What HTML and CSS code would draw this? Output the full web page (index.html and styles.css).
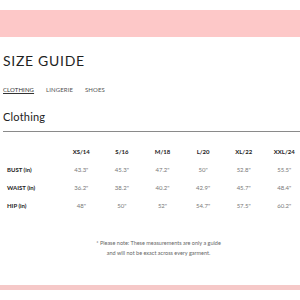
FILE: index.html
```html
<!DOCTYPE html>
<html>
<head>
<meta charset="utf-8">
<link rel="stylesheet" href="styles.css">
</head>
<body>
<div class="band-top"></div>
<main class="page">
  <h1 class="title">SIZE GUIDE</h1>
  <nav class="tabs">
    <span class="tab active">CLOTHING</span>
    <span class="tab">LINGERIE</span>
    <span class="tab">SHOES</span>
  </nav>
  <h2 class="section">Clothing</h2>
  <div class="rule"></div>
  <div class="table">
    <div class="row head">
      <span class="label"></span>
      <span>XS/14</span><span>S/16</span><span>M/18</span><span>L/20</span><span>XL/22</span><span>XXL/24</span>
    </div>
    <div class="row">
      <span class="label">BUST (in)</span>
      <span>43.3"</span><span>45.3"</span><span>47.2"</span><span>50"</span><span>52.8"</span><span>55.5"</span>
    </div>
    <div class="row">
      <span class="label">WAIST (in)</span>
      <span>36.2"</span><span>38.2"</span><span>40.2"</span><span>42.9"</span><span>45.7"</span><span>48.4"</span>
    </div>
    <div class="row">
      <span class="label">HIP (in)</span>
      <span>48"</span><span>50"</span><span>52"</span><span>54.7"</span><span>57.5"</span><span>60.2"</span>
    </div>
  </div>
  <p class="note">* Please note: These measurements are only a guide<br>and will not be exact across every garment.</p>
</main>
<div class="band-bottom"></div>
</body>
</html>
```
FILE: styles.css
```css
html, body {
  margin: 0;
  padding: 0;
  background: #ffffff;
  font-family: Lato, "Open Sans", sans-serif;
  color: #222;
  width: 300px;
  height: 300px;
  overflow: hidden;
}
body {
  display: flex;
  flex-direction: column;
}
.band-top {
  flex: none;
  margin-top: 10px;
  height: 27px;
  background: #fdc8c8;
}
.page {
  padding-left: 3px;
}
.title {
  margin: 16px 0 0 0;
  font-size: 14px;
  line-height: 16px;
  font-weight: 400;
  letter-spacing: 0.7px;
  color: #1f1f1f;
}
.tabs {
  display: flex;
  gap: 12px;
  margin-top: 17px;
  font-size: 6px;
  line-height: 8px;
  color: #555;
  letter-spacing: 0.1px;
}
.tab.active {
  text-decoration: underline;
  color: #333;
}
.section {
  margin: 16px 0 0 0;
  font-size: 11px;
  line-height: 14px;
  font-weight: 400;
  color: #222;
  letter-spacing: 0.2px;
}
.rule {
  margin-top: 7px;
  height: 1px;
  background: #8a8a8a;
}
.table {
  margin-top: 10px;
}
.row {
  display: grid;
  grid-template-columns: 58px repeat(6, 40.6px);
  height: 18px;
  align-items: center;
  font-size: 6px;
  color: #777;
}
.row span {
  text-align: center;
}
.row .label {
  text-align: left;
  padding-left: 4px;
  font-weight: 700;
  color: #222;
}
.row.head span {
  font-weight: 700;
  color: #222;
}
.note {
  margin: 24px 0 0 14px;
  text-align: center;
  font-size: 5.5px;
  line-height: 10px;
  color: #666;
}
.band-bottom {
  flex: none;
  margin-top: auto;
  margin-bottom: 10px;
  height: 5px;
  background: #f6c8c8;
}
```
